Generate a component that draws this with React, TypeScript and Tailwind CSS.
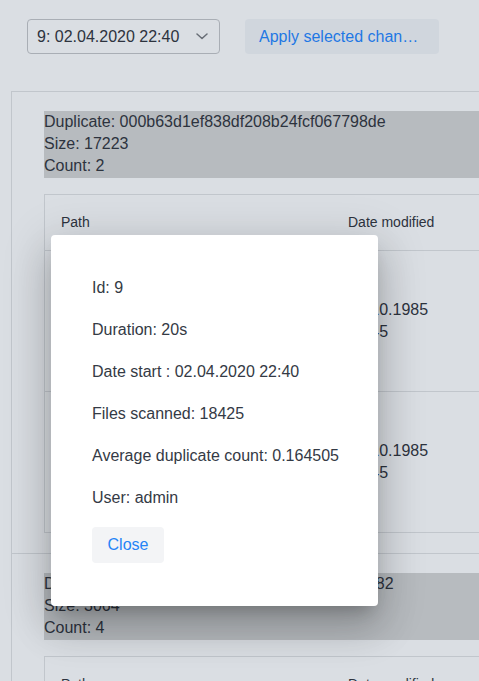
import React from "react";

const rows = [
  { path: "", date1: "21.10.1985", date2: "16:45", h: "h-[141px] border-b border-[#c1c6cc]" },
  { path: "", date1: "21.10.1985", date2: "16:45", h: "h-[140px]" },
];

function DuplicateCard({
  hash,
  size,
  count,
  showRows,
}: {
  hash: string;
  size: string;
  count: string;
  showRows: boolean;
}) {
  return (
    <div className="border-t border-l border-[#c1c6cc] pt-[19px] pl-[32px] pb-[20px]">
      <div className="bg-[#b7bbbf] leading-[22px] pb-px text-[#2d333e]">
        <div>Duplicate: {hash}</div>
        <div>Size: {size}</div>
        <div>Count: {count}</div>
      </div>
      <div className="mt-[16px] border border-[#c1c6cc]">
        <div className="flex h-[56px] items-center border-b border-[#c1c6cc] text-[14px] text-[#2d333e]">
          <div className="w-[287px] pl-4">Path</div>
          <div className="pl-4">Date modified</div>
        </div>
        {showRows &&
          rows.map((r, i) => (
            <div
              key={i}
              className={`flex items-center ${r.h} text-[#2d333e] leading-[22px]`}
            >
              <div className="w-[287px] pl-4">{r.path}</div>
              <div className="pl-4">
                <div>{r.date1}</div>
                <div>{r.date2}</div>
              </div>
            </div>
          ))}
      </div>
    </div>
  );
}

export default function App() {
  return (
    <div className="relative h-[681px] w-[479px] overflow-hidden bg-[#dadee3] font-['Liberation_Sans',Arial,sans-serif] text-[16px] text-[#2d333e]">
      <div className="flex items-center gap-[25px] pl-[27px] pt-[19px]">
        <div className="flex h-[35px] w-[193px] items-center justify-between rounded-[4px] border border-[#a9aeb5] pl-[9px] pr-[11px]">
          <span className="whitespace-nowrap">9: 02.04.2020 22:40</span>
          <svg width="12" height="7" viewBox="0 0 12 7" fill="none">
            <path d="M1 1 L6 5.5 L11 1" stroke="#686e76" strokeWidth="1.5" strokeLinecap="round" strokeLinejoin="round" />
          </svg>
        </div>
        <div className="flex h-[35px] w-[194px] items-center rounded-[4px] bg-[#d0d6dd] pl-[14px] text-[#1f78e4]">
          <span className="whitespace-nowrap">Apply selected chan…</span>
        </div>
      </div>

      <div className="ml-[11px] mt-[37px] w-[620px]">
        <DuplicateCard
          hash="000b63d1ef838df208b24fcf067798de"
          size="17223"
          count="2"
          showRows
        />
        <DuplicateCard
          hash="0012a4bd6e3f9c81d2b5a7e04c39f882"
          size="3064"
          count="4"
          showRows={false}
        />
      </div>

      <div className="absolute left-[51px] top-[235px] w-[327px] rounded-[4px] bg-white pl-[41px] pr-6 pt-10 pb-[43px] text-[#343a45] shadow-[0_11px_15px_-7px_rgba(0,0,0,0.2),0_24px_38px_3px_rgba(0,0,0,0.14),0_9px_46px_8px_rgba(0,0,0,0.12)]">
        <div className="flex flex-col gap-[17px] leading-[25px]">
          <div>Id: 9</div>
          <div>Duration: 20s</div>
          <div>Date start : 02.04.2020 22:40</div>
          <div>Files scanned: 18425</div>
          <div>Average duplicate count: 0.164505</div>
          <div>User: admin</div>
        </div>
        <button className="mt-[17px] flex h-9 w-[72px] items-center justify-center rounded-[4px] bg-[#f3f4f6] text-[#2684f6]">
          Close
        </button>
      </div>
    </div>
  );
}
